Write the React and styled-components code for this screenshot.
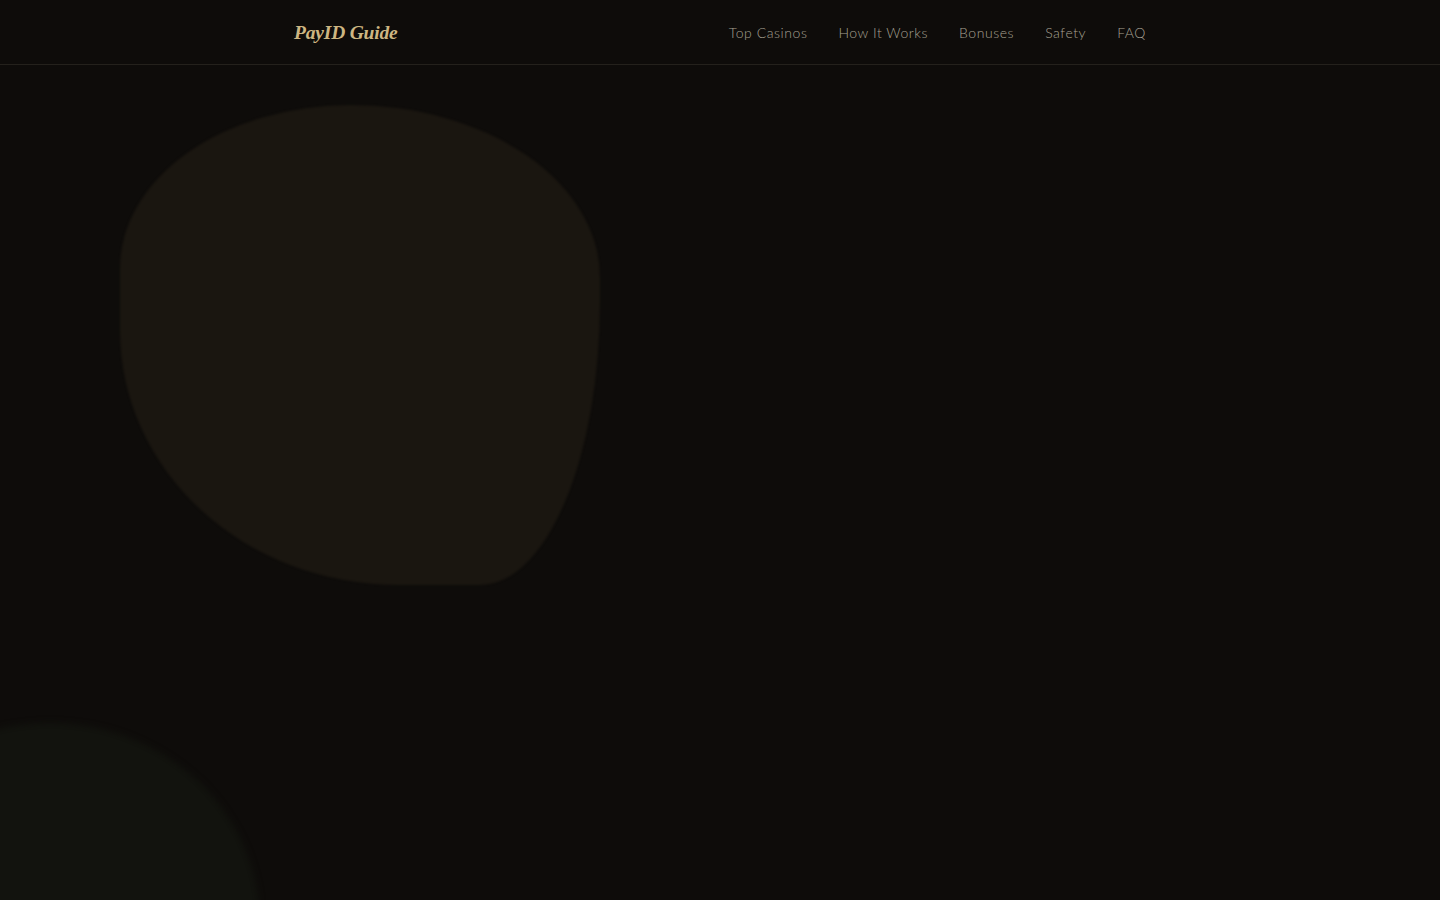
import React from "react";
import styled, { createGlobalStyle } from "styled-components";

const Global = createGlobalStyle`
  html, body { margin: 0; padding: 0; background: #0e0c0a; }
  body { font-family: "Lato", "Noto Sans", sans-serif; }
  * { box-sizing: border-box; }
`;

const Page = styled.div`
  position: relative;
  width: 100%;
  height: 900px;
  overflow: hidden;
  background: #0e0c0a;
`;

const Blob = styled.div`
  position: absolute;
  left: ${(p) => p.$left}px;
  top: ${(p) => p.$top}px;
  width: ${(p) => p.$w}px;
  height: ${(p) => p.$h}px;
  background: ${(p) => p.$color};
  border-radius: ${(p) => p.$radius};
  filter: blur(${(p) => p.$blur}px);
  pointer-events: none;
`;

const Header = styled.header`
  position: relative;
  z-index: 2;
  height: 65px;
  border-bottom: 1px solid #24211c;
  background: rgba(14, 12, 10, 0.9);
`;

const HeaderInner = styled.div`
  max-width: 900px;
  height: 100%;
  margin: 0 auto;
  padding: 0 24px;
  display: flex;
  align-items: center;
  justify-content: space-between;
`;

const Logo = styled.a`
  font-family: "Liberation Serif", "DejaVu Serif", serif;
  font-style: italic;
  font-weight: 700;
  font-size: 19.5px;
  letter-spacing: -0.01em;
  color: #cdb682;
  text-decoration: none;
  margin-top: 1px;
`;

const Nav = styled.nav`
  display: flex;
  align-items: center;
  gap: 31px;
`;

const NavLink = styled.a`
  font-family: "Lato", "Noto Sans", sans-serif;
  font-weight: 300;
  font-size: 14px;
  letter-spacing: 0.04em;
  color: #a7a192;
  text-decoration: none;
`;

const links = ["Top Casinos", "How It Works", "Bonuses", "Safety", "FAQ"];

export default function App() {
  return (
    <Page>
      <Global />
      <Blob
        $left={120}
        $top={105}
        $w={480}
        $h={480}
        $color="#1a1610"
        $radius="48% 52% 25% 58% / 34% 36% 59% 53%"
        $blur={1}
      />
      <Blob
        $left={-160}
        $top={723}
        $w={420}
        $h={400}
        $color="#12130e"
        $radius="50%"
        $blur={3}
      />
      <Header>
        <HeaderInner>
          <Logo href="#">PayID Guide</Logo>
          <Nav>
            {links.map((l) => (
              <NavLink key={l} href="#">
                {l}
              </NavLink>
            ))}
          </Nav>
        </HeaderInner>
      </Header>
    </Page>
  );
}
